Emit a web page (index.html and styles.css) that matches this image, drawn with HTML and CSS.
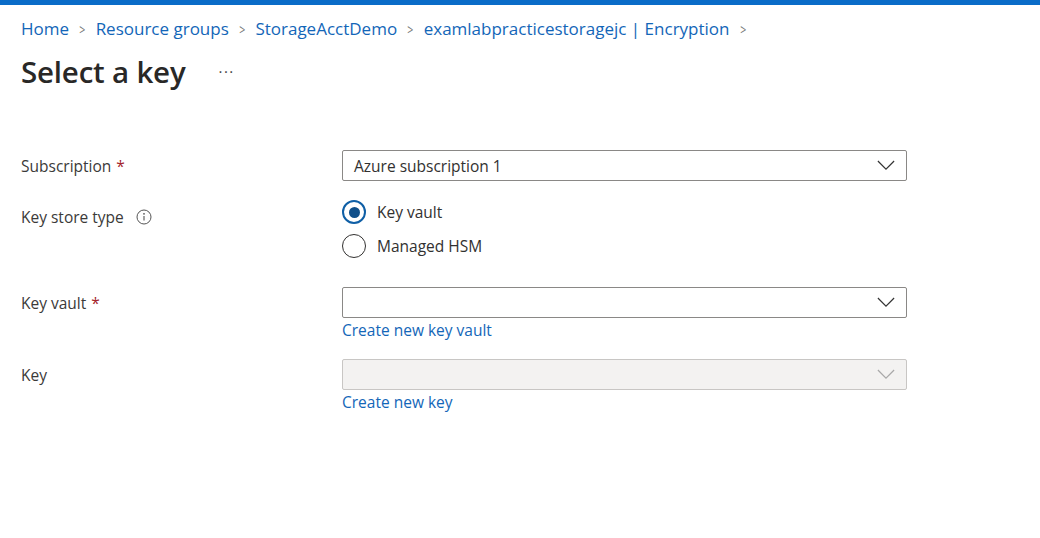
FILE: index.html
```html
<!DOCTYPE html>
<html>
<head>
<meta charset="utf-8">
<link rel="stylesheet" href="styles.css">
</head>
<body>
<div class="topbar"></div>
<main class="page">
  <nav class="crumbs">
    <a>Home</a><span class="sep">&gt;</span>
    <a>Resource groups</a><span class="sep">&gt;</span>
    <a>StorageAcctDemo</a><span class="sep">&gt;</span>
    <a>examlabpracticestoragejc | Encryption</a><span class="sep">&gt;</span>
  </nav>
  <header class="title-row">
    <h1>Select a key</h1>
    <span class="more">···</span>
  </header>

  <section class="form">
    <div class="row row-sub">
      <div class="label">Subscription <span class="req">*</span></div>
      <div class="control">
        <div class="select"><span>Azure subscription 1</span>
          <svg class="chev" viewBox="0 0 20 12" width="18" height="11"><path d="M1 1 L10 10 L19 1" fill="none" stroke="#333" stroke-width="1.3"/></svg>
        </div>
      </div>
    </div>

    <div class="row row-store">
      <div class="label">Key store type
        <svg class="info" viewBox="0 0 16 16" width="16" height="16"><circle cx="8" cy="8" r="7" fill="none" stroke="#555" stroke-width="1"/><circle cx="8" cy="4.8" r="0.9" fill="#555"/><path d="M8 7 V11.5" stroke="#555" stroke-width="1.1"/></svg>
      </div>
      <div class="control radios">
        <label class="radio"><span class="dot on"></span>Key vault</label>
        <label class="radio"><span class="dot"></span>Managed HSM</label>
      </div>
    </div>

    <div class="row row-kv">
      <div class="label">Key vault <span class="req">*</span></div>
      <div class="control">
        <div class="select"><span></span>
          <svg class="chev" viewBox="0 0 20 12" width="18" height="11"><path d="M1 1 L10 10 L19 1" fill="none" stroke="#333" stroke-width="1.3"/></svg>
        </div>
        <a class="link">Create new key vault</a>
      </div>
    </div>

    <div class="row row-key">
      <div class="label">Key</div>
      <div class="control">
        <div class="select disabled"><span></span>
          <svg class="chev" viewBox="0 0 20 12" width="18" height="11"><path d="M1 1 L10 10 L19 1" fill="none" stroke="#a8a8a8" stroke-width="1.3"/></svg>
        </div>
        <a class="link">Create new key</a>
      </div>
    </div>
  </section>
</main>
</body>
</html>
```

FILE: styles.css
```css
* { box-sizing: border-box; }
html, body { margin: 0; padding: 0; background: #fff; }
body {
  font-family: "Open Sans", "Noto Sans", sans-serif;
  color: #323130;
  width: 1040px;
  height: 538px;
  overflow: hidden;
}
.topbar { height: 5px; background: #0a6cc8; }
.page { padding: 0 0 0 21px; }

.crumbs {
  display: flex;
  align-items: center;
  height: 47px;
  font-size: 17px;
  letter-spacing: 0;
}
.crumbs a { color: #1366b8; }
.crumbs .sep {
  color: #777;
  margin: 0 9px;
  font-size: 15px;
  transform: scaleX(0.7);
  display: inline-block;
}

.title-row {
  display: flex;
  align-items: center;
  height: 40px;
  margin-top: -1px;
}
.title-row h1 {
  margin: 0;
  font-size: 29.5px;
  font-weight: 600;
  color: #292827;
  letter-spacing: -0.2px;
}
.more {
  margin-left: 33px;
  font-size: 15px;
  color: #444;
  letter-spacing: 1.5px;
}

.form { padding-top: 59px; }
.row {
  display: grid;
  grid-template-columns: 321px 565px;
}
.label {
  font-size: 15.5px;
  color: #3b3a39;
  display: flex;
  align-items: center;
  height: 31px;
  letter-spacing: 0;
}
.req { color: #a4262c; margin-left: 5px; }
.info { margin-left: 12px; }

.select {
  height: 31px;
  border: 1px solid #8a8886;
  border-radius: 2px;
  display: flex;
  align-items: center;
  justify-content: space-between;
  padding: 0 11px 0 11px;
  font-size: 15.5px;
  color: #323130;
}
.select.disabled { background: #f3f2f1; border-color: #c8c6c4; }
.chev { flex: none; }

.row-sub { height: 31px; }
.row-store { margin-top: 19px; }
.row-store .label { height: 30px; margin-top: 2px; }
.radios { display: flex; flex-direction: column; gap: 10px; }
.radio {
  display: flex;
  align-items: center;
  font-size: 15.5px;
  color: #323130;
  height: 24px;
}
.dot {
  width: 24px;
  height: 24px;
  border-radius: 50%;
  border: 1.5px solid #323130;
  margin-right: 11px;
  position: relative;
  flex: none;
}
.dot.on { border-color: #0f5fa6; border-width: 2px; }
.dot.on::after {
  content: "";
  position: absolute;
  left: 50%; top: 50%;
  width: 11px; height: 11px;
  margin: -5.5px 0 0 -5.5px;
  border-radius: 50%;
  background: #0f4f8a;
}

.row-kv { margin-top: 29px; }
.row-key { margin-top: 18px; }
.link {
  display: block;
  color: #1366b8;
  font-size: 15.5px;
  margin-top: 1px;
  line-height: 22px;
}
```
